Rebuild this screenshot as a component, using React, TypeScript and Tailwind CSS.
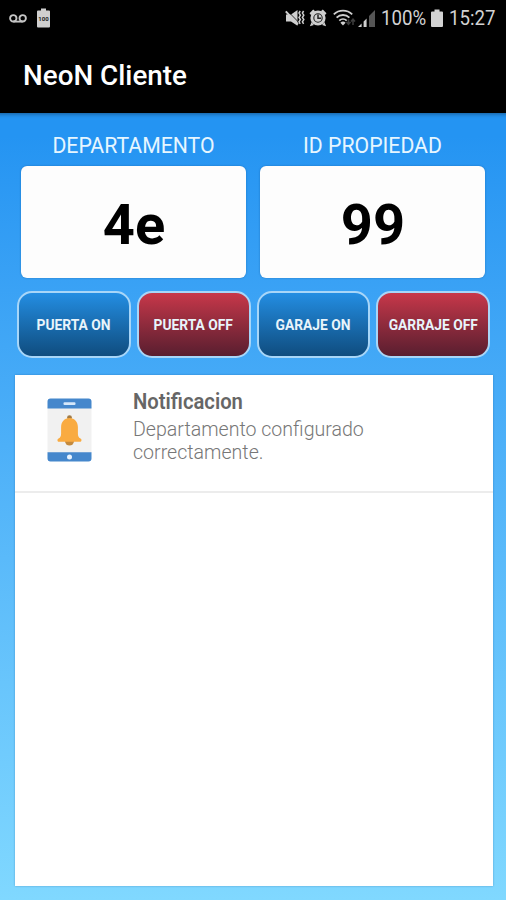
const fields = [
  { label: 'DEPARTAMENTO', value: '4e' },
  { label: 'ID PROPIEDAD', value: '99' },
];

const actions = [
  { label: 'PUERTA ON', on: true },
  { label: 'PUERTA OFF', on: false },
  { label: 'GARAJE ON', on: true },
  { label: 'GARRAJE OFF', on: false },
];

const notifications = [
  { title: 'Notificacion', body: 'Departamento configurado correctamente.' },
];

function VoicemailIcon() {
  return (
    <svg className="w-[18px] h-[9px]" viewBox="0 0 18 9" fill="none" stroke="#c4c4c4" strokeWidth="1.9">
      <circle cx="4.3" cy="4.3" r="3.2" />
      <circle cx="13.7" cy="4.3" r="3.2" />
      <path d="M4.3 7.6h9.4" />
    </svg>
  );
}

function BatteryLevelIcon() {
  return (
    <div className="relative w-[13px] h-[20px]">
      <svg className="w-full h-full" viewBox="0 0 13 20" fill="#cfcfcf">
        <path d="M4 0.5h5v2h3a1 1 0 0 1 1 1V18.5a1 1 0 0 1-1 1H1a1 1 0 0 1-1-1V3.5a1 1 0 0 1 1-1h3z" />
      </svg>
      <span className="absolute inset-x-0 top-[7px] text-center text-[6px] leading-[8px] font-bold text-[#222]">100</span>
    </div>
  );
}

function MutedIcon() {
  return (
    <svg className="w-[20px] h-[18px]" viewBox="0 0 20 18" fill="#cfcfcf">
      <path d="M1 5.5h5L12.5 1v15.8L6 12.6H1z" />
      <path d="M2.2 1.6L14 13.6" stroke="#000" strokeWidth="0.8" />
      <path d="M0.800 2.400L13 15.400" stroke="#cfcfcf" strokeWidth="2" />
      <path d="M15.200 2l-1.200 2 1.400 2.200-1.400 2.200 1.400 2.200-1.400 2.200 1.200 2M18.600 2l-1.200 2 1.400 2.200-1.400 2.200 1.400 2.200-1.400 2.200 1.200 2" fill="none" stroke="#cfcfcf" strokeWidth="1.500" />
    </svg>
  );
}

function AlarmIcon() {
  return (
    <svg className="w-[18px] h-[18px]" viewBox="0 0 18 18" fill="#cfcfcf">
      <path d="M0.5 4.2L4.2 0.6l2 1.6-4 4zM17.5 4.2L13.8 0.6l-2 1.6 4 4zM2.600 13l-1.700 4.200 4-1.200zM15.400 13l1.700 4.200-4-1.200z" />
      <circle cx="9" cy="9" r="7.6" />
      <circle cx="9" cy="9" r="4.2" fill="none" stroke="#222" strokeWidth="1.1" />
      <path d="M9 5.4v3.900h3" fill="none" stroke="#222" strokeWidth="1.5" />
    </svg>
  );
}

function WifiIcon() {
  return (
    <svg className="w-[23px] h-[18px]" viewBox="0 0 23 18" fill="none" stroke="#cfcfcf" strokeWidth="1.8">
      <path d="M0.8 5.4a13.2 13.2 0 0 1 18.4 0M3.6 8.6a9.2 9.2 0 0 1 12.8 0M6.3 11.6a5.4 5.4 0 0 1 7.4 0" />
      <path d="M10 16.4l-2.6-2.6a3.6 3.6 0 0 1 5.2 0z" fill="#cfcfcf" stroke="none" />
      <path d="M15.5 10.500v4.500M13.500 13l2 2.400 2-2.400M20 16v-5M18 12.600l2-2.400 2 2.400" stroke="#3d3d3d" strokeWidth="1.5" />
    </svg>
  );
}

function SignalIcon() {
  return (
    <svg className="w-[17px] h-[17px]" viewBox="0 0 17 17">
      <path d="M0 17l3.6-3.6V17zM5.6 11.4L8.6 8.4V17h-3z" fill="#cfcfcf" />
      <path d="M11 6l6-6v17h-6z" fill="#555" />
    </svg>
  );
}

function BatteryIcon() {
  return (
    <svg className="w-[12px] h-[18px]" viewBox="0 0 12 18" fill="#d2d2d2">
      <path d="M3.5 0.5h5v2h2.5a1 1 0 0 1 1 1V17a1 1 0 0 1-1 1H1a1 1 0 0 1-1-1V3.5a1 1 0 0 1 1-1h2.5z" />
    </svg>
  );
}

function PhoneBellIcon() {
  return (
    <svg className="w-[45px] h-[64px]" viewBox="0 0 45 64">
      <rect x="0.5" y="9" width="44" height="46" fill="#f1f1f1" />
      <path d="M3.5 0.5h38a3 3 0 0 1 3 3V10.5H0.5V3.5a3 3 0 0 1 3-3z" fill="#4587cc" />
      <path d="M0.5 54.3h44v6.2a3 3 0 0 1-3 3h-38a3 3 0 0 1-3-3z" fill="#4587cc" />
      <rect x="16.5" y="4.3" width="12" height="2.6" rx="1" fill="#d6e8fa" />
      <circle cx="22.5" cy="59" r="2.5" fill="#e8f3ff" />
      <circle cx="22.5" cy="19.6" r="2.4" fill="#a27b45" />
      <path d="M18 43h9a4.5 4.5 0 0 1-9 0z" fill="#c48a3d" />
      <path d="M22.5 20c-5.2 0-8.4 4-8.4 9v6.5c0 2.7-.6 4-2.6 4.9-1.6.8-1.2 3.4.5 3.4h21c1.7 0 2.1-2.6.5-3.4-2-.9-2.6-2.2-2.6-4.9V29c0-5-3.2-9-8.4-9z" fill="#f9ab41" />
    </svg>
  );
}

export default function App() {
  return (
    <div className="w-[506px] h-[900px] flex flex-col overflow-hidden bg-black font-[Roboto,sans-serif]">
      {/* Status bar */}
      <div className="h-9 flex items-center justify-between pl-[9px] pr-[11px] text-[#d2d2d2]">
        <div className="flex items-center gap-[10px]">
          <VoicemailIcon />
          <BatteryLevelIcon />
        </div>
        <div className="flex items-center">
          <MutedIcon />
          <div className="ml-[4px] flex"><AlarmIcon /></div>
          <div className="ml-[6px] flex"><WifiIcon /></div>
          <div className="ml-[2px] flex"><SignalIcon /></div>
          <span className="ml-[6px] w-[45px] text-[21px] leading-none">
            <span className="inline-block origin-left scale-x-[0.89]">100%</span>
          </span>
          <div className="ml-[5px] flex"><BatteryIcon /></div>
          <span className="ml-[6px] w-[46px] text-[21px] leading-none">
            <span className="inline-block origin-left scale-x-[0.89]">15:27</span>
          </span>
        </div>
      </div>

      {/* Title bar */}
      <header className="h-[77px] flex items-center pl-[23px] pt-[3px]">
        <h1 className="origin-left scale-x-[1.03] text-[27px] leading-none font-medium text-white">NeoN Cliente</h1>
      </header>

      <main className="flex-1 flex flex-col pl-[14.5px] pr-[13.5px] pb-[14px] bg-gradient-to-b from-[#2494f2] from-[3%] to-[#80d8ff] shadow-[inset_0_6px_4px_-5px_rgba(0,0,0,0.4)]">
        <div className="flex gap-[14px] pl-[6.5px] pr-[7.5px] pt-5">
          {fields.map((field) => (
            <div key={field.label} className="flex-1">
              <p className="h-[33px] pt-px scale-x-[0.965] text-center text-[22px] leading-6 text-[#e6f6ff]">{field.label}</p>
              <div className="h-[112px] flex items-center justify-center rounded-md bg-[#fdfdfd] shadow-[0_0_2px_rgba(0,60,120,0.45)]">
                <span className="pl-px pt-[6px] text-[56px] leading-none font-bold text-black">{field.value}</span>
              </div>
            </div>
          ))}
        </div>

        <div className="mt-[13px] flex gap-[6px] pl-[2.5px] pr-[2.5px]">
          {actions.map((action) => (
            <button
              key={action.label}
              className={`h-[67px] flex-1 rounded-[15px] border-2 border-[#a8d6f8] bg-gradient-to-b bg-origin-border pt-[2px] text-[14px] font-bold whitespace-nowrap text-[#e9f4fb] ${
                action.on ? 'from-[#2490e6] to-[#0f4b7c]' : 'from-[#cc384a] to-[#561d2e]'
              }`}
            >
              <span className="inline-block scale-x-[0.985]">{action.label}</span>
            </button>
          ))}
        </div>

        <section className="mt-[17px] flex-1 bg-white shadow-[0_0_2px_rgba(0,60,120,0.35)]">
          {notifications.map((item) => (
            <article key={item.title} className="h-[118px] flex items-start border-b-2 border-[#ececec]">
              <div className="w-[118px] pl-[32px] pt-[23px]">
                <PhoneBellIcon />
              </div>
              <div className="w-[270px] pt-[15px]">
                <h2 className="origin-left scale-x-[0.92] text-[22px] leading-6 font-semibold text-[#666]">{item.title}</h2>
                <p className="mt-[4px] origin-left scale-x-[0.955] text-[20.5px] leading-[23px] font-light text-[#777]">{item.body}</p>
              </div>
            </article>
          ))}
        </section>
      </main>
    </div>
  );
}
